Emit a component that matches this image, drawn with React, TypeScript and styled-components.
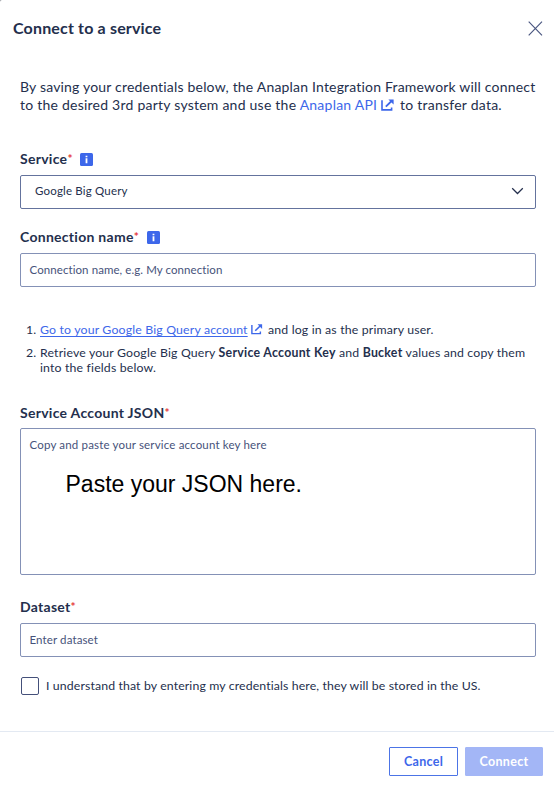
import React from "react";
import styled, { createGlobalStyle } from "styled-components";

const GlobalStyle = createGlobalStyle`
  * { box-sizing: border-box; }
  body { margin: 0; background: #8a8d94; }
`;

const navy = "#242f4d";
const blue = "#3d67ea";

const Dialog = styled.section`
  display: flex;
  flex-direction: column;
  width: 554px;
  height: 789px;
  overflow: hidden;
  background: #fff;
  border-top-left-radius: 2px;
  color: ${navy};
  font-family: Lato, sans-serif;
`;

const Header = styled.header`
  display: flex;
  justify-content: space-between;
  align-items: center;
  height: 56px;
  padding: 0 11px 0 13px;
`;

const Title = styled.h1`
  margin: 0;
  padding-bottom: 1px;
  font-size: 16px;
  line-height: 20px;
  font-weight: 700;
  letter-spacing: 0.17px;
`;

const IconButton = styled.button`
  display: flex;
  padding: 0;
  border: 0;
  background: none;
`;

const Body = styled.main`
  flex: 1;
  display: flex;
  flex-direction: column;
  padding: 22px 18px 0 20px;
`;

const Intro = styled.p`
  margin: 0 0 37px;
  font-size: 14px;
  line-height: 18px;
  letter-spacing: 0.19px;
  white-space: nowrap;
`;

const IntroLine = styled.span<{ $spacing: number }>`
  display: block;
  height: 18px;
  letter-spacing: ${(p) => p.$spacing}px;
`;

const Link = styled.a<{ $underlined?: boolean }>`
  color: ${blue};
  text-decoration: ${(p) => (p.$underlined ? "underline" : "none")};
  text-underline-offset: 2px;
  text-decoration-thickness: 1px;
  text-decoration-skip-ink: ${(p) => (p.$underlined ? "none" : "auto")};
`;

const Field = styled.div<{ $gap?: number }>`
  display: flex;
  flex-direction: column;
  margin-bottom: ${(p) => p.$gap ?? 20}px;
`;

const Label = styled.label<{ $below?: number }>`
  display: flex;
  align-items: center;
  height: 16px;
  margin-bottom: ${(p) => p.$below ?? 8}px;
  font-size: 14px;
  font-weight: 700;
  line-height: 16px;
  letter-spacing: 0.28px;
`;

const Required = styled.span`
  color: #e5383b;
  font-weight: 700;
  font-size: 12px;
  letter-spacing: 0;
`;

const InfoBadge = styled.svg`
  margin-left: 8px;
`;

const Control = styled.div<{ $strong?: boolean }>`
  display: flex;
  align-items: center;
  justify-content: space-between;
  width: 516px;
  height: 34px;
  padding: ${(p) => (p.$strong ? "0 11px 2px 14px" : "0 8.5px")};
  border: 1px solid ${(p) => (p.$strong ? "#64739d" : "#8491b6")};
  border-radius: 2px;
`;

const ControlText = styled.span<{ $spacing: number; $muted?: boolean }>`
  font-size: 11.5px;
  line-height: 14px;
  letter-spacing: ${(p) => p.$spacing}px;
  color: ${(p) => (p.$muted ? "#46527a" : navy)};
`;

const TextArea = styled.div`
  display: flex;
  flex-direction: column;
  align-items: flex-start;
  width: 516px;
  height: 147px;
  padding: 9px 8.5px;
  border: 1px solid #8491b6;
  border-radius: 2px;
`;

const PasteNote = styled.span`
  margin: 19px 0 0 36px;
  color: #000;
  font: 23px/27px "Liberation Sans", Arial, sans-serif;
`;

const Steps = styled.ol`
  display: flex;
  flex-direction: column;
  gap: 8px;
  margin: 15px 0 30px;
  padding: 0 0 0 6px;
  list-style: none;
  font-size: 12.3px;
  line-height: 15px;
  letter-spacing: 0.16px;
`;

const Step = styled.li`
  display: grid;
  grid-template-columns: 14px 1fr;
  white-space: nowrap;
`;

const Strong = styled.strong`
  letter-spacing: 0.28px;
`;

const Consent = styled.label`
  display: flex;
  align-items: center;
  gap: 7px;
  margin-left: 1px;
  font-size: 12.3px;
  line-height: 18px;
  letter-spacing: 0.12px;
`;

const Checkbox = styled.span`
  width: 18px;
  height: 18px;
  border: 1px solid #44507a;
  border-radius: 2px;
`;

const Footer = styled.footer`
  display: flex;
  justify-content: flex-end;
  gap: 7px;
  height: 58px;
  padding: 15px 11px 0;
  border-top: 1px solid #e3e9f2;
`;

const Button = styled.button<{ $primary?: boolean }>`
  width: ${(p) => (p.$primary ? 78 : 69)}px;
  height: 29px;
  padding: 0;
  border: 1px solid ${(p) => (p.$primary ? "#a3b6f6" : "#4c74e6")};
  border-radius: 1px;
  background: ${(p) => (p.$primary ? "#a3b6f6" : "#fff")};
  color: ${(p) => (p.$primary ? "#fff" : blue)};
  font: 700 12.5px/16px Lato, sans-serif;
  letter-spacing: 0.3px;
`;

const LinkGlyph = styled.svg<{ $before: number; $after: number }>`
  margin: 0 ${(p) => p.$after}px 0 ${(p) => p.$before}px;
  vertical-align: -1px;
`;

function ExternalIcon({ size, before, after }: { size: number; before: number; after: number }) {
  return (
    <LinkGlyph $before={before} $after={after} width={size} height={(size * 12) / 13} viewBox="0 0 13 12" fill="none" stroke={blue}>
      <path d="M1 1.2V10.9H10.6V8.4" strokeWidth="1.6" />
      <path d="M4.8 7.6L10.6 2" strokeWidth="1.8" />
      <path d="M7.4 0.4H12.6V5.6Z" fill={blue} stroke="none" />
    </LinkGlyph>
  );
}

function Info() {
  return (
    <InfoBadge width="13" height="13" viewBox="0 0 13 13">
      <rect width="13" height="13" rx="1.5" fill={blue} />
      <path d="M5.6 2.7H7.4V4.3H5.6ZM5.6 5.3H7.4V10.2H5.6Z" fill="#fff" />
    </InfoBadge>
  );
}

export default function App() {
  return (
    <>
      <GlobalStyle />
      <Dialog>
        <Header>
          <Title>Connect to a service</Title>
          <IconButton aria-label="Close">
            <svg width="15" height="15" viewBox="0 0 15 15" fill="none" stroke="#4a5680" strokeWidth="1.15">
              <path d="M0.7 0.7L14 14.3M14 0.7L0.7 14.3" />
            </svg>
          </IconButton>
        </Header>
        <Body>
          <Intro>
            <IntroLine $spacing={0.19}>
              By saving your credentials below, the Anaplan Integration Framework will connect
            </IntroLine>
            <IntroLine $spacing={0.235}>
              to the desired 3rd party system and use the <Link>Anaplan API</Link>
              <ExternalIcon size={13} before={4} after={2} /> to transfer data.
            </IntroLine>
          </Intro>
          <Field>
            <Label>Service<Required>*</Required><Info /></Label>
            <Control $strong>
              <ControlText $spacing={0.18}>Google Big Query</ControlText>
              <svg width="13" height="8" viewBox="0 0 13 8" fill="none" stroke={navy} strokeWidth="1.25">
                <path d="M1.2 1.2L6.5 6.5L11.8 1.2" />
              </svg>
            </Control>
          </Field>
          <Field>
            <Label>Connection name<Required>*</Required><Info /></Label>
            <Control>
              <ControlText $muted $spacing={0.08}>Connection name, e.g. My connection</ControlText>
            </Control>
          </Field>
          <Steps>
            <Step>
              <span>1.</span>
              <span>
                <Link $underlined>Go to your Google Big Query account</Link>
                <ExternalIcon size={11.5} before={3.5} after={2} /> and log in as the primary user.
              </span>
            </Step>
            <Step>
              <span>2.</span>
              <span>
                Retrieve your Google Big Query <Strong>Service Account Key</Strong> and <Strong>Bucket</Strong> values and copy them
                <br />
                into the fields below.
              </span>
            </Step>
          </Steps>
          <Field $gap={24}>
            <Label $below={7}>Service Account JSON<Required>*</Required></Label>
            <TextArea>
              <ControlText $muted $spacing={0.17}>Copy and paste your service account key here</ControlText>
              <PasteNote>Paste your JSON here.</PasteNote>
            </TextArea>
          </Field>
          <Field>
            <Label>Dataset<Required>*</Required></Label>
            <Control>
              <ControlText $muted $spacing={0.12}>Enter dataset</ControlText>
            </Control>
          </Field>
          <Consent>
            <Checkbox />
            I understand that by entering my credentials here, they will be stored in the US.
          </Consent>
        </Body>
        <Footer>
          <Button>Cancel</Button>
          <Button $primary>Connect</Button>
        </Footer>
      </Dialog>
    </>
  );
}
